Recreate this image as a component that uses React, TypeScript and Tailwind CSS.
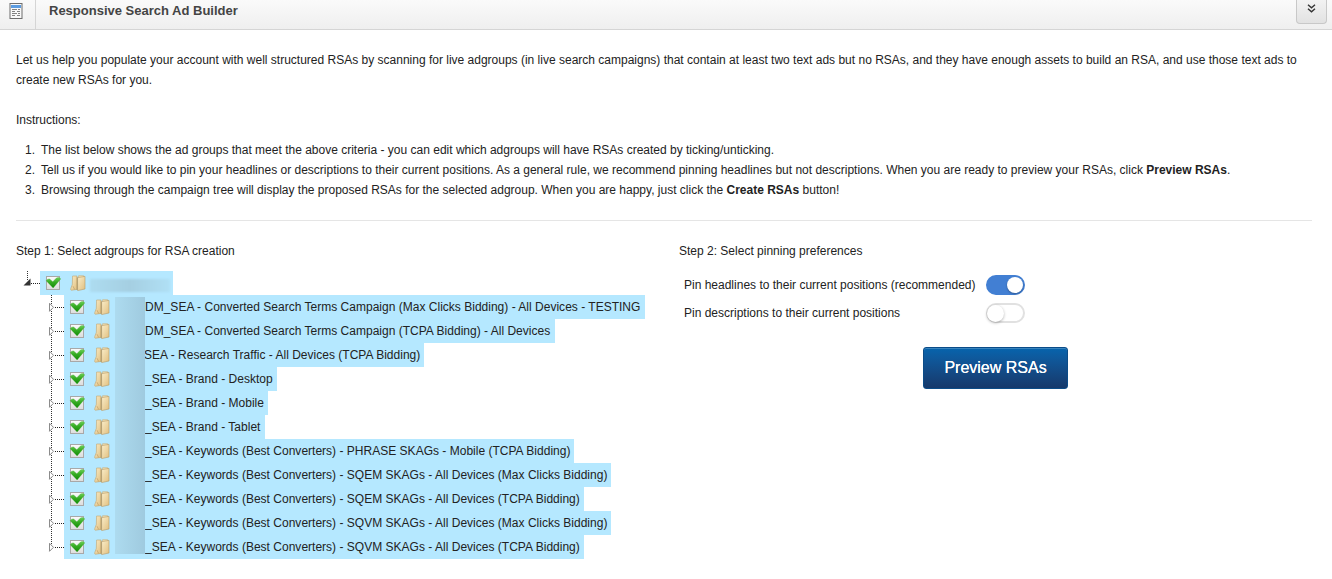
import { useState } from "react";

interface Campaign {
  name: string;
  width: string;
  indent?: string;
}

const instructions = [
  <>
    The list below shows the ad groups that meet the above criteria - you can edit which adgroups will have RSAs created
    by ticking/unticking.
  </>,
  <>
    Tell us if you would like to pin your headlines or descriptions to their current positions. As a general rule, we
    recommend pinning headlines but not descriptions. When you are ready to preview your RSAs, click{" "}
    <b>Preview RSAs</b>.
  </>,
  <>
    Browsing through the campaign tree will display the proposed RSAs for the selected adgroup. When you are happy, just
    click the <b>Create RSAs</b> button!
  </>,
];

const campaigns: Campaign[] = [
  {
    name: "DM_SEA - Converted Search Terms Campaign (Max Clicks Bidding) - All Devices - TESTING",
    width: "w-[581px]",
  },
  {
    name: "DM_SEA - Converted Search Terms Campaign (TCPA Bidding) - All Devices",
    width: "w-[491px]",
  },
  { name: "SEA - Research Traffic - All Devices (TCPA Bidding)", width: "w-[360px]", indent: "-ml-px" },
  { name: "_SEA - Brand - Desktop", width: "w-[213px]" },
  { name: "_SEA - Brand - Mobile", width: "w-[204px]" },
  { name: "_SEA - Brand - Tablet", width: "w-[201px]" },
  { name: "_SEA - Keywords (Best Converters) - PHRASE SKAGs - Mobile (TCPA Bidding)", width: "w-[510px]" },
  { name: "_SEA - Keywords (Best Converters) - SQEM SKAGs - All Devices (Max Clicks Bidding)", width: "w-[547px]" },
  { name: "_SEA - Keywords (Best Converters) - SQEM SKAGs - All Devices (TCPA Bidding)", width: "w-[520px]" },
  { name: "_SEA - Keywords (Best Converters) - SQVM SKAGs - All Devices (Max Clicks Bidding)", width: "w-[547px]" },
  { name: "_SEA - Keywords (Best Converters) - SQVM SKAGs - All Devices (TCPA Bidding)", width: "w-[520px]" },
];

const CheckIcon = () => (
  <svg className="h-4 w-4 shrink-0" viewBox="0 0 16 16">
    <defs>
      <linearGradient id="tick" x1="0" y1="0" x2="0" y2="1">
        <stop offset="0" stopColor="#6fcf5a" />
        <stop offset=".45" stopColor="#35ab22" />
        <stop offset="1" stopColor="#128a06" />
      </linearGradient>
      <linearGradient id="box" x1="0" y1="0" x2="0" y2="1">
        <stop offset="0" stopColor="#fbfbfb" />
        <stop offset="1" stopColor="#dcdcdc" />
      </linearGradient>
    </defs>
    <rect x="1.5" y="1.5" width="13" height="13" fill="url(#box)" stroke="#a8a8a8" />
    <path
      d="M1.2 5.8C2 4.1 4.2 3.3 5.2 4.4L7.8 6.8 11.2 3.2C12.6 2 14.9 2.4 15.7 4L8.1 13z"
      fill="url(#tick)"
      stroke="#3aa92a"
      strokeWidth=".3"
    />
  </svg>
);

const FolderIcon = () => (
  <svg className="h-4 w-4 shrink-0" viewBox="0 0 16 16">
    <defs>
      <linearGradient id="folder" x1="0" y1="0" x2="1" y2="1">
        <stop offset="0" stopColor="#fbeec9" />
        <stop offset="1" stopColor="#e0bf80" />
      </linearGradient>
    </defs>
    <path
      d="M2.6 1H7V14.4L1.6 15.2C.6 15.2.4 14.2.8 13.4L2.3 9.5z"
      fill="url(#folder)"
      stroke="#c0a470"
      strokeWidth=".6"
    />
    <path d="M3 11.2 4.6 14.4" stroke="#b8935a" strokeWidth=".6" />
    <path d="M8.6 .7H13.6V2.6H8.6z" fill="#f6e3b5" stroke="#c0a470" strokeWidth=".5" />
    <path d="M7.6 2.6 15 1.4V14L7.6 15.6z" fill="url(#folder)" stroke="#b89a64" strokeWidth=".6" />
    <path d="M7.2 2.4v12.6" stroke="#a98b57" strokeWidth=".7" />
  </svg>
);

const ReportIcon = () => (
  <svg className="h-4 w-[14px]" viewBox="0 0 14 16">
    <rect x="1" y=".5" width="12" height="15" fill="#f8f8f8" stroke="#6d6d6d" />
    <rect x="2" y="2" width="10" height="3" fill="#5b9be0" />
    <path d="M3 6.5h5M9 6.5h2M3 8.5h3M8 8.5h3M3 10.5h5M9 10.5h2M3 12.5h3M8 12.5h3" stroke="#828282" />
  </svg>
);

const DoubleChevron = () => (
  <svg className="h-[9px] w-[9px]" viewBox="0 0 9 9" fill="none" stroke="#333" strokeWidth="1.4">
    <path d="m1 .8 3.5 3L8 .8M1 4.8l3.5 3 3.5-3" />
  </svg>
);

const TreeRow = ({ campaign, last }: { campaign: Campaign; last: boolean }) => (
  <li className="flex h-6">
    <svg className="h-6 w-4 shrink-0" viewBox="0 0 16 24">
      <path d={last ? "M3.5 0v12" : "M3.5 0v24"} stroke="#333" strokeDasharray="1 1" />
      <path d="M1.5 8.3v8l4-4z" fill="#fff" stroke="#8b8b8b" />
      <path d="M7 12.5h9" stroke="#222" strokeDasharray="1 1" />
    </svg>
    <div className={`flex items-center bg-[#b5e8ff] pl-[5px] ${campaign.width}`}>
      <CheckIcon />
      <span className="ml-[9px] flex">
        <FolderIcon />
      </span>
      <span className="w-[35px] shrink-0" />
      <span className={`tracking-[0.012px] whitespace-nowrap ${campaign.indent ?? ""}`}>{campaign.name}</span>
    </div>
  </li>
);

const Toggle = ({ on, onClick }: { on: boolean; onClick: () => void }) => (
  <button
    role="switch"
    aria-checked={on}
    onClick={onClick}
    className={`flex h-5 w-[39px] items-center rounded-full border-2 ${
      on ? "justify-end border-[#427fd3] bg-[#427fd3]" : "border-[#e1e1e1] bg-white"
    }`}
  >
    <span
      className={`rounded-full bg-white ${
        on ? "h-4 w-4 shadow-[0_1px_2px_rgba(0,0,0,0.3)]" : "-ml-px h-[17px] w-[17px] shadow-[0_1px_3px_rgba(0,0,0,0.3)]"
      }`}
    />
  </button>
);

const App = () => {
  const [pinHeadlines, setPinHeadlines] = useState(true);
  const [pinDescriptions, setPinDescriptions] = useState(false);

  return (
    <div className="h-[579px] w-[1332px] overflow-hidden bg-white font-['Liberation_Sans',Arial,sans-serif] text-[12px] leading-5 text-[#222]">
      <header className="flex h-[30px] items-start border-b border-[#d5d5d5] bg-linear-to-b from-[#fafafa] to-[#efefef]">
        <div className="flex h-[30px] w-9 shrink-0 justify-center border-r border-[#d5d5d5] pt-[3px] pr-1">
          <ReportIcon />
        </div>
        <h1 className="ml-[13px] text-[13px] leading-[21px] font-bold text-[#444]">Responsive Search Ad Builder</h1>
        <button className="mr-[5px] ml-auto flex h-6 w-[31px] justify-center rounded-b border border-t-0 border-[#c8c8c8] bg-linear-to-b from-[#f2f2f2] to-[#e2e2e2] pt-[4px]">
          <DoubleChevron />
        </button>
      </header>

      <main className="px-4 pt-5">
        <p className="w-[1300px]">
          Let us help you populate your account with well structured RSAs by scanning for live adgroups (in live search
          campaigns) that contain at least two text ads but no RSAs, and they have enough assets to build an RSA, and use
          those text ads to create new RSAs for you.
        </p>
        <p className="mt-5">Instructions:</p>
        <ol className="mt-2.5">
          {instructions.map((text, i) => (
            <li key={i} className="flex">
              <span className="w-[25px] shrink-0 pl-[9px]">{i + 1}.</span>
              <span>{text}</span>
            </li>
          ))}
        </ol>
        <hr className="mt-5 mr-1 border-[#e5e5e5]" />

        <div className="mt-5 flex">
          <section className="w-[663px] shrink-0">
            <h2>Step 1: Select adgroups for RSA creation</h2>
            <div className="mt-[10px] flex h-6">
              <svg className="h-6 w-6 shrink-0" viewBox="0 0 24 24">
                <path d="M11.5 0v9" stroke="#333" strokeDasharray="1 1" />
                <path d="M7.5 14.5h7V7.5z" fill="#333" />
                <path d="M15 12.5h9" stroke="#222" strokeDasharray="1 1" />
              </svg>
              <div className="flex w-[133px] items-center bg-[#b5e8ff] pl-[5px]">
                <CheckIcon />
                <span className="ml-[9px] flex">
                  <FolderIcon />
                </span>
                <span className="mt-1 ml-1 h-[13px] w-20 bg-linear-to-r from-[#addcf0] via-[#a5cfe2] to-[#b0e0f5] blur-[1px]" />
              </div>
            </div>
            <div className="relative ml-8">
              <ul>
                {campaigns.map((campaign, i) => (
                  <TreeRow key={campaign.name} campaign={campaign} last={i === campaigns.length - 1} />
                ))}
              </ul>
              <div className="absolute top-0.5 left-[67px] h-[257px] w-[30px] bg-linear-to-r from-[#addbef] to-[#9fcadf]" />
            </div>
          </section>

          <section>
            <h2>Step 2: Select pinning preferences</h2>
            <div className="mt-[14px] ml-[5px] flex w-[341px] items-center justify-between">
              <span>Pin headlines to their current positions (recommended)</span>
              <Toggle on={pinHeadlines} onClick={() => setPinHeadlines(!pinHeadlines)} />
            </div>
            <div className="mt-2 ml-[5px] flex w-[341px] items-center justify-between">
              <span>Pin descriptions to their current positions</span>
              <Toggle on={pinDescriptions} onClick={() => setPinDescriptions(!pinDescriptions)} />
            </div>
            <button className="mt-6 ml-[244px] h-[42px] w-[145px] rounded-[3px] border border-[#0b4c88] bg-linear-to-b from-[#0664ad] to-[#15396b] text-base text-white shadow-[inset_0_1px_0_#3984bd] [text-shadow:0_0_0.5px_white]">
              Preview RSAs
            </button>
          </section>
        </div>
      </main>
    </div>
  );
};

export default App;
